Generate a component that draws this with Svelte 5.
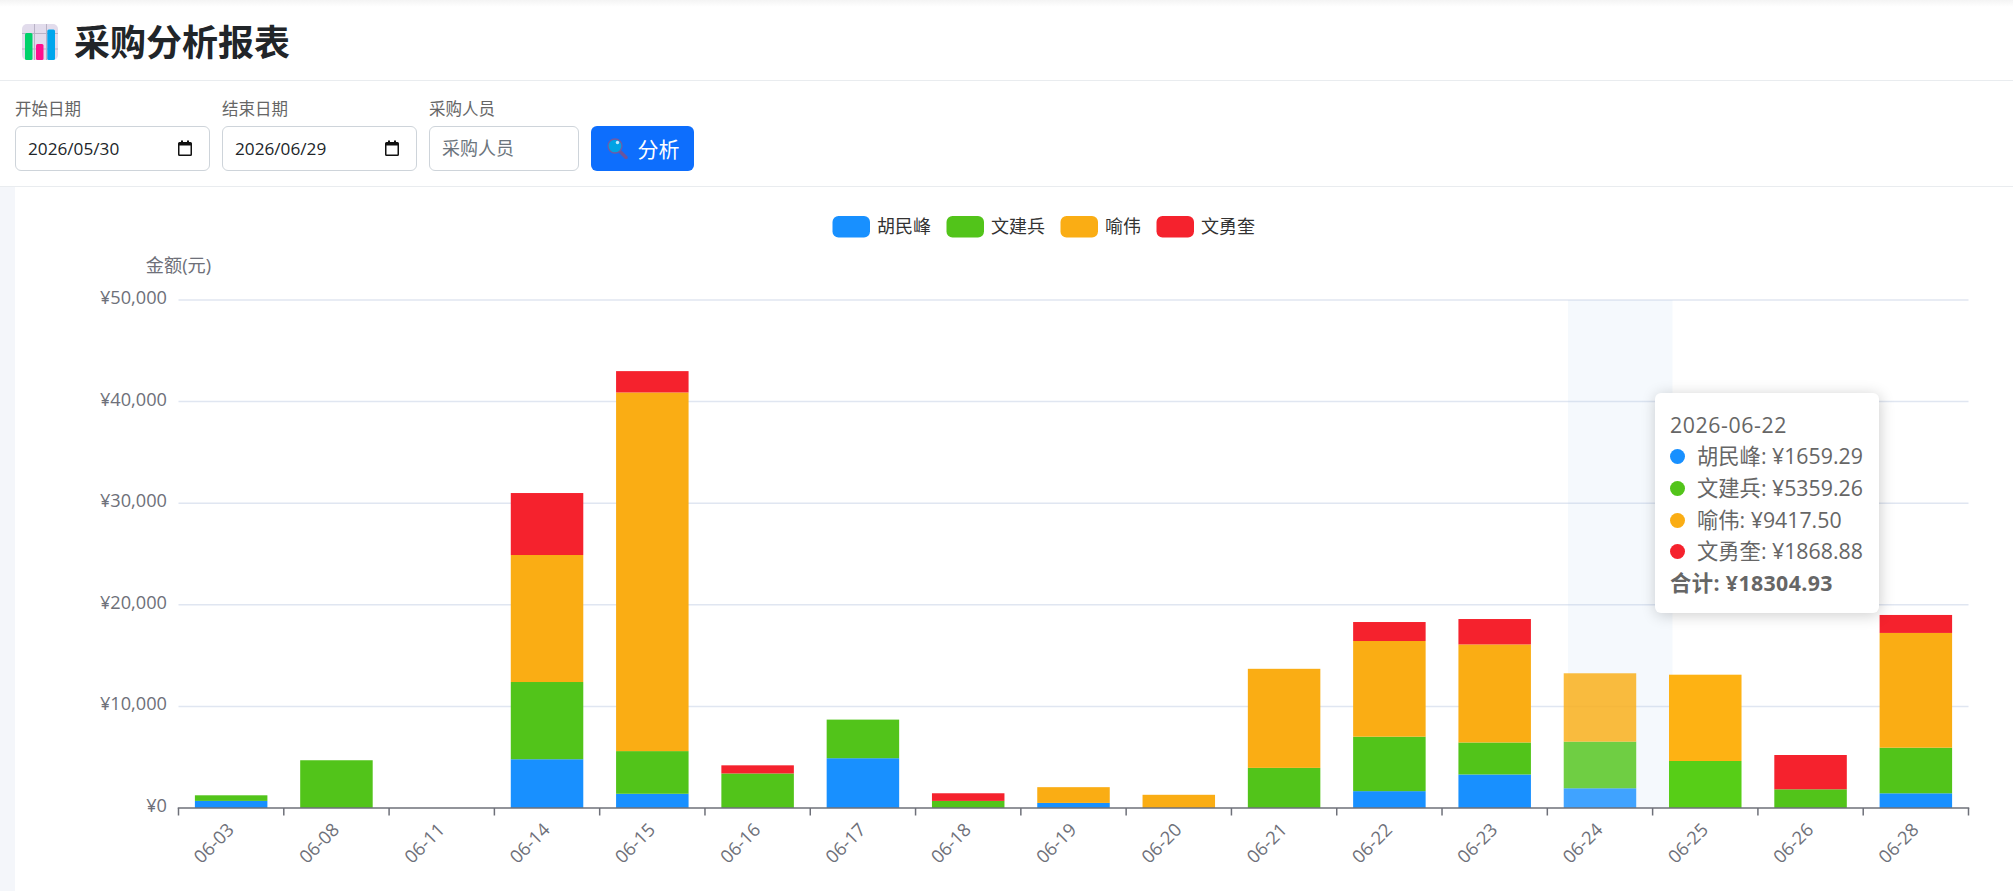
<script>
  const names = ["胡民峰", "文建兵", "喻伟", "文勇奎"];
  const colors = ["#1890ff", "#52c41a", "#faad14", "#f5222d"];
  const brightColors = ["#1890ff", "#57ce17", "#feb213", "#f5222d"];

  // blue, green, orange, red per day
  const days = [
    { label: "06-03", v: [700, 550, 0, 0] },
    { label: "06-08", v: [0, 4700, 0, 0] },
    { label: "06-11", v: [0, 0, 0, 0] },
    { label: "06-14", v: [4800, 7600, 12500, 6100] },
    { label: "06-15", v: [1400, 4200, 35300, 2100] },
    { label: "06-16", v: [0, 3400, 0, 800] },
    { label: "06-17", v: [4900, 3800, 0, 0] },
    { label: "06-18", v: [0, 700, 0, 750] },
    { label: "06-19", v: [500, 0, 1550, 0] },
    { label: "06-20", v: [0, 0, 1300, 0] },
    { label: "06-21", v: [0, 3950, 9750, 0] },
    { label: "06-22", v: [1659.29, 5359.26, 9417.5, 1868.88] },
    { label: "06-23", v: [3300, 3150, 9650, 2500] },
    { label: "06-24", v: [1940, 4590, 6730, 0], fade: true },
    { label: "06-25", v: [0, 4626, 8494, 0], bright: true },
    { label: "06-26", v: [0, 1840, 0, 3376] },
    { label: "06-28", v: [1447, 4488, 11295, 1770] },
  ];

  const left = 178.5;
  const right = 1968.5;
  const base = 808;
  const perUnit = 508 / 50000;
  const step = (right - left) / days.length;
  const barW = 72.5;

  const ticks = [0, 10000, 20000, 30000, 40000, 50000];

  const bars = days.flatMap((d, i) => {
    let sum = 0;
    const x = left + step * i + (step - barW) / 2;
    return d.v.map((val, s) => {
      const y = base - (sum + val) * perUnit;
      sum += val;
      return { x, y, h: val * perUnit, fill: d.bright ? brightColors[s] : colors[s], fade: d.fade, key: `${i}-${s}` };
    }).filter((b) => b.h > 0);
  });

  const legend = [
    { x: 832.5, name: names[0], color: colors[0] },
    { x: 946.5, name: names[1], color: colors[1] },
    { x: 1060.5, name: names[2], color: colors[2] },
    { x: 1156.5, name: names[3], color: colors[3] },
  ];

  const rows = [
    { name: names[0], color: colors[0], val: "1659.29" },
    { name: names[1], color: colors[1], val: "5359.26" },
    { name: names[2], color: colors[2], val: "9417.50" },
    { name: names[3], color: colors[3], val: "1868.88" },
  ];

  const money = (n) => "¥" + n.toLocaleString("en-US");
</script>

<div class="page">
  <header class="top">
    <svg class="logo" viewBox="0 0 36 36" aria-hidden="true">
      <rect width="36" height="36" rx="5" fill="#e2dcec" />
      <path d="M0 9.500H36M0 25H36M12.500 0V36M24.500 0V36" stroke="#b9b3c6" stroke-width="1" />
      <rect x="3" y="9" width="7.500" height="27" rx="1.500" fill="#00d26a" />
      <rect x="14" y="20" width="7.500" height="16" rx="1.500" fill="#ff0f8f" />
      <rect x="25.300" y="5.500" width="7.700" height="30.500" rx="1.500" fill="#00a6ed" />
    </svg>
    <h1>采购分析报表</h1>
  </header>

  <section class="filters">
    <div class="field">
      <label for="start">开始日期</label>
      <div class="date">
        <input id="start" type="text" value="2026/05/30" readonly />
        <svg viewBox="0 0 14 16" aria-hidden="true">
          <path d="M3 0.500h2v1.500h4V0.500h2V2h1.500A1.500 1.500 0 0 1 14 3.500v11a1.500 1.500 0 0 1-1.500 1.500h-11A1.500 1.500 0 0 1 0 14.500v-11A1.500 1.500 0 0 1 1.500 2H3zM1.500 5.500v9h11v-9z" fill="#111" />
        </svg>
      </div>
    </div>
    <div class="field">
      <label for="end">结束日期</label>
      <div class="date">
        <input id="end" type="text" value="2026/06/29" readonly />
        <svg viewBox="0 0 14 16" aria-hidden="true">
          <path d="M3 0.500h2v1.500h4V0.500h2V2h1.500A1.500 1.500 0 0 1 14 3.500v11a1.500 1.500 0 0 1-1.500 1.500h-11A1.500 1.500 0 0 1 0 14.500v-11A1.500 1.500 0 0 1 1.500 2H3zM1.500 5.500v9h11v-9z" fill="#111" />
        </svg>
      </div>
    </div>
    <div class="field">
      <label for="buyer">采购人员</label>
      <input id="buyer" class="buyer" type="text" placeholder="采购人员" />
    </div>
    <button class="go">
      <svg viewBox="0 0 21 21" aria-hidden="true">
        <path d="M12.500 13L19 19.500" stroke="#6b559c" stroke-width="3.400" stroke-linecap="round" />
        <circle cx="8" cy="8" r="7" fill="#00a3e4" stroke="#6f5aa6" stroke-width="1.300" />
        <circle cx="10.500" cy="4.500" r="1.700" fill="#bfeaff" />
      </svg>
      <span>分析</span>
    </button>
  </section>

  <main class="panel">
    <svg class="chart" viewBox="15 187 1998 704" aria-label="采购金额图表">
      {#each legend as item}
        <rect x={item.x} y="216" width="37.500" height="21.500" rx="6" fill={item.color} />
        <text class="legend" x={item.x + 44.500} y="232.500">{item.name}</text>
      {/each}

      <text class="axis-name" x="178.500" y="272" text-anchor="middle">金额(元)</text>

      {#each ticks as t}
        {#if t > 0}
          <line x1={left} x2={right} y1={base - t * perUnit} y2={base - t * perUnit} stroke="#e0e6f1" stroke-width="1.500" />
        {/if}
        <text class="tick" x="167" y={base - t * perUnit + 4} text-anchor="end">{money(t)}</text>
      {/each}

      <rect x="1568" y="300" width="104.500" height="508" fill="#b4cdf0" fill-opacity="0.13" />

      {#each bars as b (b.key)}
        <rect
          x={b.x}
          y={b.y}
          width={barW}
          height={b.h}
          fill={b.fill}
          fill-opacity={b.fade ? 0.82 : 1}
        />
      {/each}

      <line x1={left - 0.750} x2={right + 0.750} y1={base} y2={base} stroke="#6e7079" stroke-width="1.500" />
      {#each Array(days.length + 1) as _, i}
        <line x1={left + step * i} x2={left + step * i} y1={base} y2={base + 7.500} stroke="#6e7079" stroke-width="1.500" />
      {/each}

      {#each days as d, i}
        <text
          class="tick"
          x="0"
          y="0"
          text-anchor="end"
          transform={`translate(${left + step * i + step / 2 + 4} ${base + 23}) rotate(-45)`}
        >{d.label}</text>
      {/each}
    </svg>

    <div class="tip">
      <div class="tip-date">2026-06-22</div>
      {#each rows as r}
        <div class="tip-row">
          <span class="dot" style:background={r.color}></span>{r.name}: ¥{r.val}
        </div>
      {/each}
      <div class="tip-total">合计: ¥18304.93</div>
    </div>
  </main>
</div>

<style>
  :global(body) {
    margin: 0;
    overflow: hidden;
  }

  .page {
    width: 2013px;
    height: 891px;
    overflow: hidden;
    background: #f4f6fa;
    font-family: "Open Sans", "Noto Sans CJK SC", sans-serif;
  }

  .top {
    height: 80.500px;
    display: flex;
    align-items: center;
    gap: 16px;
    padding: 5px 0 0 22px;
    box-sizing: border-box;
    background: linear-gradient(#f4f4f4, #fff 7px);
    border-bottom: 1.5px solid #e9ecef;
  }

  .logo {
    width: 36px;
    height: 36px;
    flex: none;
  }

  h1 {
    margin: -4px 0 0;
    font-family: "Noto Sans CJK SC", sans-serif;
    font-size: 36px;
    font-weight: 700;
    line-height: 1;
    color: #212529;
  }

  .filters {
    height: 106px;
    box-sizing: border-box;
    display: flex;
    align-items: flex-end;
    gap: 12px;
    padding: 0 0 15px 15px;
    background: #fff;
    border-bottom: 1.5px solid #e9ecef;
  }

  .field {
    display: flex;
    flex-direction: column;
    gap: 5px;
  }

  label {
    font-size: 16.500px;
    line-height: 24px;
    color: #666;
  }

  input {
    height: 45px;
    box-sizing: border-box;
    border: 1.500px solid #ced4da;
    border-radius: 6px;
    background: #fff;
    font-family: inherit;
    font-size: 17.200px;
    color: #212529;
    outline: none;
  }

  .date {
    position: relative;
    width: 195px;
    height: 45px;
  }

  .date input {
    width: 100%;
    padding: 0 12px;
  }

  .date svg {
    position: absolute;
    top: 14.500px;
    left: 163px;
    width: 14px;
    height: 16px;
  }

  .buyer {
    width: 150px;
    padding: 0 12px;
    font-size: 18px;
  }

  .buyer::placeholder {
    color: #6c757d;
  }

  .go {
    width: 103px;
    height: 45px;
    display: flex;
    align-items: center;
    justify-content: center;
    gap: 10px;
    padding: 0 0 0 1px;
    border: none;
    border-radius: 6px;
    background: #0d6efd;
    color: #fff;
    font-family: "Noto Sans CJK SC", sans-serif;
    font-size: 21px;
  }

  .go svg {
    width: 21px;
    height: 21px;
  }

  .panel {
    position: relative;
    margin-left: 15px;
    height: 704px;
    background: #fff;
  }

  .chart {
    display: block;
    width: 1998px;
    height: 704px;
  }

  .legend {
    font-family: "Noto Sans CJK SC", sans-serif;
    font-size: 18px;
    fill: #333;
  }

  .axis-name,
  .tick {
    font-family: "Open Sans", "Noto Sans CJK SC", sans-serif;
    font-size: 18.200px;
    fill: #6e7079;
  }

  .tip {
    position: absolute;
    left: 1640px;
    top: 206px;
    width: 224px;
    height: 220px;
    box-sizing: border-box;
    padding: 16px 15px 0;
    background: #fff;
    border-radius: 6px;
    box-shadow: rgba(0, 0, 0, 0.2) 1px 2px 15px;
    font-size: 21.300px;
    line-height: 31.700px;
    color: #666;
    white-space: nowrap;
  }

  .tip-date {
    letter-spacing: 0.6px;
  }

  .dot {
    display: inline-block;
    width: 15px;
    height: 15px;
    margin-right: 12px;
    border-radius: 50%;
  }

  .tip-total {
    font-weight: 700;
    letter-spacing: 0.4px;
  }
</style>
